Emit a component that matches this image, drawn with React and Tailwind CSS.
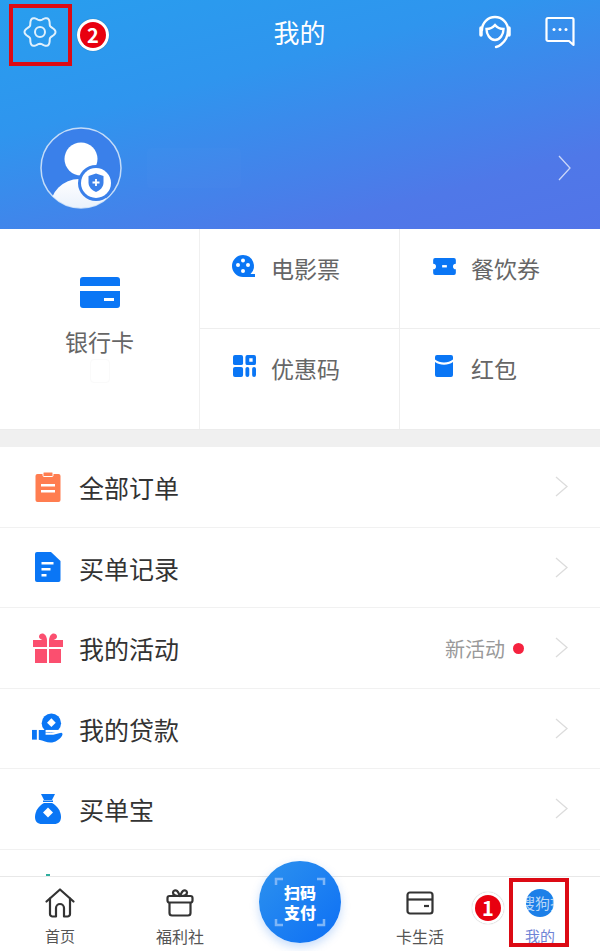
const FONT = "font-['Noto_Sans_CJK_SC','Noto_Sans',sans-serif]";

// six rounded lobes around the centre
const gearPath = Array.from({ length: 72 }, (_, i) => {
  const t = (i / 72) * Math.PI * 2;
  const r = 13.6 + 1.9 * Math.cos(6 * t);
  return `${i ? 'L' : 'M'}${(17 + r * Math.cos(t)).toFixed(2)} ${(17 + r * Math.sin(t)).toFixed(2)}`;
}).join('') + 'Z';

const GearIcon = () => (
  <svg width="34" height="34" viewBox="0 0 34 34" fill="none" stroke="#fff" strokeOpacity="0.85" strokeWidth="2" strokeLinejoin="round">
    <path d={gearPath} />
    <circle cx="17" cy="17" r="5" />
  </svg>
);

const Chevron = ({ w, h, color }) => (
  <svg width={w} height={h} viewBox={`0 0 ${w} ${h}`} fill="none" stroke={color} strokeWidth="1.300">
    <path d={`M1 1L${w - 1} ${h / 2}L1 ${h - 1}`} />
  </svg>
);

const ServiceIcon = () => (
  <svg width="34" height="34" viewBox="0 0 34 34" fill="none" stroke="#fff" strokeWidth="2.400" strokeLinecap="round">
    <path d="M4 15a13 13 0 0 1 26 0c0 6-2.500 11-7 14.500-1.500 1.200-3 2-5 2.500" />
    <path d="M3 13v7" strokeWidth="3.500" />
    <path d="M31 13v7" strokeWidth="3.500" />
    <path d="M8.500 14c3 0 6-1 8.500-4 2.500 3 5.500 4 8.500 4 0 5.500-3.500 11-8.500 11s-8.500-5.500-8.500-11z" />
  </svg>
);

const MessageIcon = () => (
  <svg width="30" height="32" viewBox="0 0 30 32" fill="none">
    <path d="M3 2h24a1.500 1.500 0 0 1 1.500 1.500V29L24 25H3a1.500 1.500 0 0 1-1.500-1.500v-20A1.500 1.500 0 0 1 3 2z" stroke="#fff" strokeWidth="2.200" strokeLinejoin="round" />
    <circle cx="9" cy="13.500" r="1.500" fill="#fff" />
    <circle cx="15" cy="13.500" r="1.500" fill="#fff" />
    <circle cx="21" cy="13.500" r="1.500" fill="#fff" />
  </svg>
);

const Avatar = () => (
  <svg width="84" height="84" viewBox="0 0 84 84">
    <defs>
      <linearGradient id="body" x1="0" y1="0" x2="0" y2="1">
        <stop offset="0" stopColor="#ffffff" />
        <stop offset="1" stopColor="#d5e4f8" />
      </linearGradient>
      <clipPath id="clip">
        <circle cx="42" cy="42" r="40" />
      </clipPath>
    </defs>
    <circle cx="42" cy="42" r="40" fill="#3a80ea" stroke="#c4dcf8" strokeWidth="1.500" />
    <circle cx="42" cy="33" r="16.500" fill="#fff" />
    <g clipPath="url(#clip)">
      <ellipse cx="40" cy="82" rx="29" ry="29" fill="url(#body)" />
    </g>
    <circle cx="57" cy="57" r="18" fill="#3a80ea" />
    <circle cx="57" cy="57" r="15" fill="#fff" />
    <path d="M57 47.500l7.500 2.500v6.500c0 4.500-3.500 8-7.500 9.500-4-1.500-7.500-5-7.500-9.500V50z" fill="#3a80ea" />
    <path d="M57 53v7M53.500 56.500h7" stroke="#fff" strokeWidth="1.800" />
  </svg>
);

const BankCardIcon = () => (
  <svg width="40" height="31" viewBox="0 0 40 31" fill="#0a76f5">
    <path d="M0 9V3a3 3 0 0 1 3-3h34a3 3 0 0 1 3 3v6z" />
    <path d="M0 14h40v14a3 3 0 0 1-3 3H3a3 3 0 0 1-3-3z" />
    <rect x="24" y="21" width="10" height="3" fill="#fff" />
  </svg>
);

const FilmIcon = () => (
  <svg width="24" height="23" viewBox="0 0 24 23" fill="#0a76f5">
    <path d="M11 0a11 11 0 0 1 7.500 19H23v3H11a11 11 0 0 1 0-22z" />
    <circle cx="11" cy="5.500" r="2" fill="#fff" />
    <circle cx="6" cy="10" r="2" fill="#fff" />
    <circle cx="16" cy="10" r="2" fill="#fff" />
    <circle cx="11" cy="16" r="2" fill="#fff" />
  </svg>
);

const CouponIcon = () => (
  <svg width="23" height="17" viewBox="0 0 24 18" fill="#0a76f5">
    <path d="M2 0h20a2 2 0 0 1 2 2v4a3 3 0 0 0 0 6v4a2 2 0 0 1-2 2H2a2 2 0 0 1-2-2v-4a3 3 0 0 0 0-6V2a2 2 0 0 1 2-2z" />
    <rect x="9.500" y="7.500" width="5" height="2.500" fill="#fff" />
  </svg>
);

const QrIcon = () => (
  <svg width="23" height="22" viewBox="0 0 24 23" fill="#0a76f5">
    <rect x="0" y="0" width="10.500" height="10.500" rx="2" />
    <rect x="0" y="12.500" width="10.500" height="10.500" rx="2" />
    <path d="M15 0h7a2 2 0 0 1 2 2v6.500a2 2 0 0 1-2 2h-7a2 2 0 0 1-2-2V2a2 2 0 0 1 2-2zm2 3.500v3.500h3.500V3.500z" fillRule="evenodd" />
    <rect x="13" y="12.500" width="4" height="10.500" rx="2" />
    <rect x="20" y="12.500" width="4" height="10.500" rx="2" />
  </svg>
);

const EnvelopeIcon = () => (
  <svg width="18" height="22" viewBox="0 0 18 22" fill="#0a76f5">
    <path d="M2 0h14a2 2 0 0 1 2 2v2.500c-2.500 2-5.500 3-9 3s-6.500-1-9-3V2a2 2 0 0 1 2-2z" />
    <path d="M0 7c2.500 1.700 5.500 2.700 9 2.700S15.500 8.700 18 7v13a2 2 0 0 1-2 2H2a2 2 0 0 1-2-2z" />
  </svg>
);

const ClipboardIcon = () => (
  <svg width="26" height="30" viewBox="0 0 26 30">
    <rect x="0.500" y="2" width="25" height="28" rx="2" fill="#ff7d50" />
    <rect x="8" y="0" width="10" height="4.500" rx="1" fill="#ff7d50" stroke="#fff" strokeWidth="1" />
    <rect x="6" y="12" width="14" height="2.500" fill="#fff" />
    <rect x="6" y="18" width="14" height="2.500" fill="#fff" />
  </svg>
);

const DocIcon = () => (
  <svg width="26" height="30" viewBox="0 0 26 30">
    <path d="M2 0h14l9.500 9v19a2 2 0 0 1-2 2H2a2 2 0 0 1-2-2V2a2 2 0 0 1 2-2z" fill="#0a76f5" />
    <rect x="6.500" y="10" width="12" height="2.500" fill="#fff" />
    <rect x="6.500" y="16" width="9" height="2.500" fill="#fff" />
    <rect x="6.500" y="22" width="5" height="2.500" fill="#fff" />
  </svg>
);

const GiftIcon = () => (
  <svg width="30" height="30" viewBox="0 0 30 30" fill="#fb4f6f">
    <path d="M14 7.500C11 7.500 6 7 6 3.500 6 1 9 0 11 1c2 1 3 4 3 6.500z" />
    <path d="M16 7.500c3 0 8-.5 8-4C24 1 21 0 19 1c-2 1-3 4-3 6.500z" />
    <rect x="0" y="7" width="14" height="7" />
    <rect x="16" y="7" width="14" height="7" />
    <rect x="2" y="16" width="12" height="14" />
    <rect x="16" y="16" width="12" height="14" />
  </svg>
);

const LoanIcon = () => (
  <svg width="32" height="30" viewBox="0 0 32 30" fill="#0a76f5">
    <rect x="0" y="17" width="5" height="10" />
    <path d="M7 17h8c2 0 3.500 1 4 3h-5v2h8l8-2c1.500 0 2 1.500 1 3-2.500 4-7 7-12 7-4 0-7-2-12-3z" />
    <circle cx="20" cy="10" r="10" />
    <path d="M20 5l4.500 4.500L20 14l-4.500-4.500z" fill="#fff" />
    <path d="M14 17h16v2.500H14z" fill="#fff" />
  </svg>
);

const BagIcon = () => (
  <svg width="26" height="30" viewBox="0 0 26 30" fill="#0a76f5">
    <path d="M6 0h14l-3 6h-8z" />
    <rect x="8" y="6.500" width="10" height="1.500" />
    <path d="M9 9h8c5 2.500 9 8 9 14 0 4.500-2.500 7-7 7H7c-4.500 0-7-2.500-7-7 0-6 4-11.500 9-14z" />
    <path d="M13 13.500l5 5-5 5-5-5z" fill="#fff" />
  </svg>
);

const HomeIcon = () => (
  <svg width="30" height="30" viewBox="0 0 30 30" fill="none" stroke="#333" strokeWidth="2.200" strokeLinejoin="round" strokeLinecap="round">
    <path d="M1.500 13.500 15 1.500l13.500 12" />
    <path d="M5 10.500V26a2.500 2.500 0 0 0 2.500 2.500H11V20a4 4 0 0 1 8 0v8.500h3.500A2.500 2.500 0 0 0 25 26V10.500" />
  </svg>
);

const NavGiftIcon = () => (
  <svg width="28" height="28" viewBox="0 0 28 28" fill="none" stroke="#333" strokeWidth="2.200" strokeLinejoin="round">
    <rect x="1.500" y="7" width="25" height="6.500" rx="2" />
    <path d="M3.500 13.500V24a2.500 2.500 0 0 0 2.500 2.500h16a2.500 2.500 0 0 0 2.500-2.500V13.500" />
    <path d="M13 7C10 7 7 6 7 3.500 7 1.500 9.500 .7 11 1.800 12.500 3 13 5 14 7c1-2 1.500-4 3-5.200C18.500 .7 21 1.500 21 3.500 21 6 18 7 15 7" />
  </svg>
);

const NavCardIcon = () => (
  <svg width="28" height="24" viewBox="0 0 28 24" fill="none" stroke="#333" strokeWidth="2.200">
    <rect x="1.500" y="1.500" width="25" height="21" rx="2.500" />
    <path d="M1.500 8.500h25" />
    <path d="M18 15h5" />
  </svg>
);

const ScanCorners = () => (
  <svg className="absolute inset-0" width="82" height="82" viewBox="0 0 82 82" fill="none" stroke="#7fb6f7" strokeWidth="2.500">
    <path d="M17 24v-6h7" />
    <path d="M58 18h7v6" />
    <path d="M17 58v6h7" />
    <path d="M58 64h7v-6" />
  </svg>
);

const gridItems = [
  { label: '电影票', icon: FilmIcon, cell: 'border-r border-b' },
  { label: '餐饮券', icon: CouponIcon, cell: 'border-b' },
  { label: '优惠码', icon: QrIcon, cell: 'border-r' },
  { label: '红包', icon: EnvelopeIcon, cell: '' },
];

const rows = [
  { label: '全部订单', icon: ClipboardIcon },
  { label: '买单记录', icon: DocIcon },
  { label: '我的活动', icon: GiftIcon, extra: '新活动' },
  { label: '我的贷款', icon: LoanIcon },
  { label: '买单宝', icon: BagIcon },
];

function Badge({ n, className }) {
  return (
    <div className={`absolute flex h-8 w-8 items-center justify-center rounded-full bg-white shadow-[0_0_1px_rgba(0,0,0,0.4)] ${className}`}>
      <div className="flex h-[26px] w-[26px] items-center justify-center rounded-full bg-[#e8000f] text-[20px] leading-none font-bold text-white">
        {n}
      </div>
    </div>
  );
}

export default function App() {
  return (
    <div className={`relative flex h-[951px] w-[600px] flex-col overflow-hidden bg-white ${FONT}`}>
      {/* header */}
      <div className="h-[229px] shrink-0 bg-[linear-gradient(165deg,#289eee_0%,#2f95ee_35%,#4f78e8_80%,#5274e8_100%)]">
        <div className="flex h-[63px] items-center justify-between pr-[25px] pl-[23px]">
          <GearIcon />
          <div className="ml-[64px] text-[26px] text-white">我的</div>
          <div className="flex items-center gap-[33px]">
            <ServiceIcon />
            <MessageIcon />
          </div>
        </div>
        <div className="mt-[63px] flex items-center pr-[29px] pl-[39px]">
          <Avatar />
          <div className="ml-[24px] h-[40px] w-[94px] rounded bg-white/[0.012]" />
          <div className="ml-auto">
            <Chevron w={13} h={26} color="rgba(255,255,255,0.7)" />
          </div>
        </div>
      </div>

      {/* cards */}
      <div className="flex h-[201px] shrink-0 border-b border-[#ececec]">
        <div className="flex w-[200px] shrink-0 flex-col items-center border-r border-[#f0f0f0] pt-[48px]">
          <BankCardIcon />
          <div className="mt-[16px] text-[23px] leading-[34px] text-[#666]">银行卡</div>
          <div className="mt-[1px] h-[24px] w-[20px] rounded-sm border border-[#fafafa]" />
        </div>
        <div className="grid flex-1 grid-cols-2 grid-rows-2">
          {gridItems.map((item) => (
            <div key={item.label} className={`flex items-start border-[#eeeeee] pt-[24px] pl-[32px] ${item.cell}`}>
              <div className="flex h-[26px] w-[24px] items-center justify-center">
                <item.icon />
              </div>
              <div className="ml-[15px] text-[23px] leading-[30px] text-[#666]">{item.label}</div>
            </div>
          ))}
        </div>
      </div>
      <div className="h-[17px] shrink-0 bg-[#f0f0f0]" />

      {/* list */}
      <div className="min-h-0 flex-1 overflow-hidden">
        {rows.map((row) => (
          <div key={row.label} className="flex h-[80.5px] items-center border-b border-[#f1f1f1] pr-[32px] pl-[32px]">
            <div className="flex w-[31px] justify-center">
              <row.icon />
            </div>
            <div className="ml-[16px] pt-[2px] text-[25px] text-[#333]">{row.label}</div>
            {row.extra && (
              <div className="ml-auto flex items-center pt-[2px]">
                <span className="text-[20px] text-[#999]">{row.extra}</span>
                <span className="ml-[8px] mr-[31px] h-[11px] w-[11px] rounded-full bg-[#f5223f]" />
              </div>
            )}
            <div className={row.extra ? '' : 'ml-auto'}>
              <Chevron w={13} h={21} color="#dcdcdc" />
            </div>
          </div>
        ))}
        <div className="ml-[46px] mt-[24px] h-[2px] w-[4px] bg-[#2fae9f]" />
      </div>

      {/* bottom nav */}
      <div className="grid h-[75px] shrink-0 grid-cols-5 border-t border-[#e8e8e8] bg-white">
        <div className="flex flex-col items-center pt-[11px]">
          <div className="flex h-[30px] items-center"><HomeIcon /></div>
          <span className="mt-[8px] text-[15px] leading-[20px] text-[#555]">首页</span>
        </div>
        <div className="flex flex-col items-center pt-[11px]">
          <div className="flex h-[30px] items-center"><NavGiftIcon /></div>
          <span className="mt-[8px] text-[16px] leading-[20px] text-[#555]">福利社</span>
        </div>
        <div />
        <div className="flex flex-col items-center pt-[11px]">
          <div className="flex h-[30px] items-center"><NavCardIcon /></div>
          <span className="mt-[8px] text-[16px] leading-[20px] text-[#555]">卡生活</span>
        </div>
        <div className="flex flex-col items-center pt-[11px]">
          <div className="flex h-[30px] items-center">
            <div className="h-[28px] w-[28px] rounded-full bg-[#1c7fe8]" />
          </div>
          <span className="mt-[8px] text-[15px] leading-[20px] text-[#6f84d6]">我的</span>
        </div>
      </div>

      {/* scan button floats over the nav */}
      <div className="absolute top-[861px] left-[259px] flex h-[82px] w-[82px] items-center justify-center rounded-full bg-[linear-gradient(135deg,#2d92ee,#0d6ff5)] shadow-[0_4px_10px_rgba(30,120,240,0.25)]">
        <ScanCorners />
        <span className="w-[34px] text-center text-[16px] leading-[20px] font-black break-all text-white">扫码支付</span>
      </div>

      {/* watermark and annotations */}
      <div className="absolute top-[893px] left-[511px] text-[15px] leading-[20px] whitespace-nowrap text-white/70">S搜狗指南</div>
      <div className="absolute top-[4px] left-[9px] h-[62px] w-[63px] border-4 border-[#dc0a14]" />
      <div className="absolute top-[878px] left-[509px] h-[69px] w-[60px] border-4 border-[#dc0a14]" />
      <Badge n="2" className="top-[19px] left-[77px]" />
      <Badge n="1" className="top-[892px] left-[472px]" />
    </div>
  );
}
